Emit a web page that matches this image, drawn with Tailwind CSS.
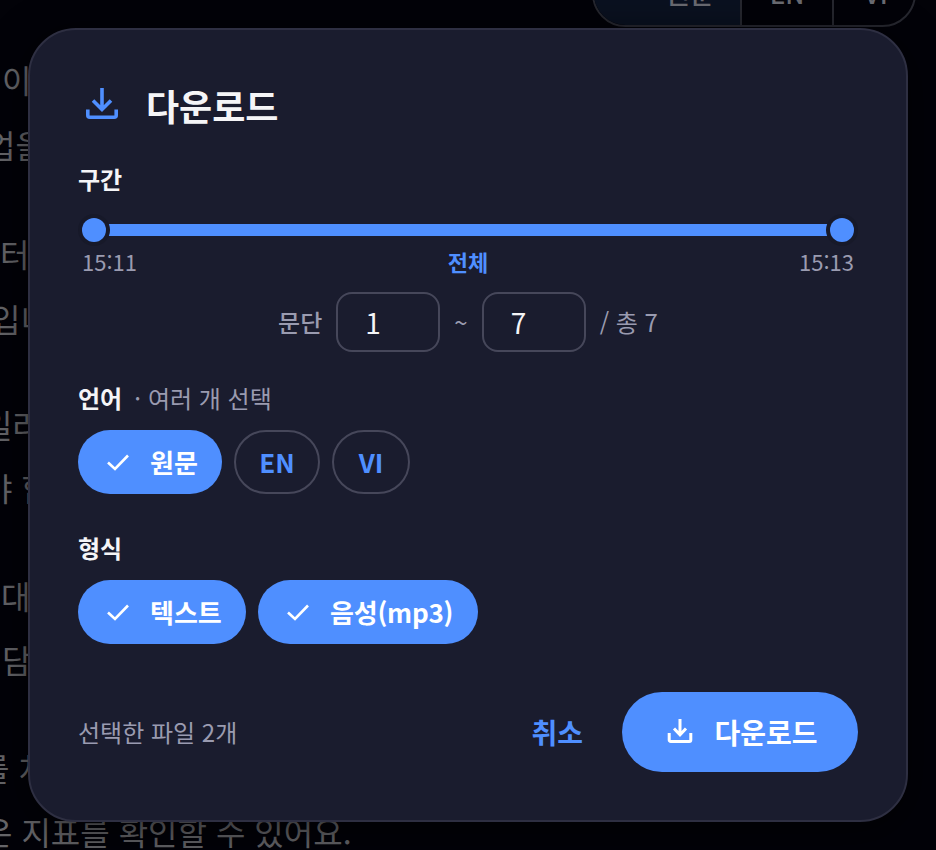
<!DOCTYPE html>
<html lang="ko"><head><meta charset="utf-8">
<script src="https://cdn.jsdelivr.net/npm/@tailwindcss/browser@4"></script>
</head>
<body class="m-0 bg-black">
<div class="relative w-[936px] h-[850px] overflow-hidden bg-[#020208] font-['Noto_Sans_CJK_KR','Noto_Sans',sans-serif]">
  <!-- page behind the dialog -->
  <div class="absolute inset-0 text-[32px] leading-[64px] text-[#66666a] whitespace-nowrap pt-[47px]">
    <p class="ml-[2px]">이</p>
    <p class="-ml-[14px] mt-[1px]">업을</p>
    <p class="ml-[0px] mt-[45px]">터</p>
    <p class="-ml-[9px] mt-[1px]">입니</p>
    <p class="-ml-[17px] mt-[42px]">일러</p>
    <p class="-ml-[17px] -mt-[1px]">야 합</p>
    <p class="ml-[1px] mt-[44px]">대</p>
    <p class="ml-[2px]">담</p>
    <p class="-ml-[20px] mt-[44px]">를 처</p>
    <p class="-ml-[17px]">은 지표를 확인할 수 있어요.</p>
  </div>
  <div class="absolute left-[592px] -top-[40px] w-[324px] h-[67px] rounded-[34px] border-2 border-[#26272f] flex overflow-hidden text-[26px] font-medium text-[#6a6b72]">
    <div class="w-[148px] bg-[#0a1120] flex items-end justify-center border-r-2 border-[#26272f] pb-[13px] pl-[46px]">원문</div>
    <div class="w-[92px] flex items-end justify-center border-r-2 border-[#26272f] pb-[13px]">EN</div>
    <div class="flex-1 flex items-end justify-center pb-[13px] pl-[4px]">VI</div>
  </div>

  <!-- dialog -->
  <div class="absolute left-[28px] top-[28px] w-[880px] h-[794px] rounded-[48px] border-2 border-[#2e2f42] bg-[#1a1c2e] px-[48px] pt-[48px] flex flex-col shadow-[0_8px_40px_rgba(0,0,0,0.6)]">
    <div class="flex items-center h-[54px] pl-[6px] gap-[26px]">
      <svg class="w-[36px] h-[36px] shrink-0" viewBox="0 0 36 36" fill="none" stroke="#4f8fff" stroke-width="3.6">
        <path d="M18 1V22M9 13.500L18 22.500L27 13.500"/>
        <path d="M3.800 22.500V28.200a2 2 0 0 0 2 2H30.200a2 2 0 0 0 2-2V22.500"/>
      </svg>
      <h2 class="text-[36px] font-semibold leading-[54px] text-[#f5f5f7]">다운로드</h2>
    </div>

    <div class="mt-[29px] text-[24px] font-semibold leading-[36px] text-[#f5f5f7]">구간</div>
    <div class="relative mt-[27px] h-[12px] mx-[16px] bg-[#4f8fff]">
      <span class="absolute -left-[12px] -top-[6px] w-[24px] h-[24px] rounded-full bg-[#4f8fff] shadow-[0_0_0_4px_#171929]"></span>
      <span class="absolute -right-[12px] -top-[6px] w-[24px] h-[24px] rounded-full bg-[#4f8fff] shadow-[0_0_0_4px_#171929]"></span>
    </div>
    <div class="mt-[7px] mx-[4px] flex justify-between text-[22px] leading-[36px] text-[#9a9bb0]">
      <span>15:11</span><span class="font-semibold text-[#4f8fff]">전체</span><span>15:13</span>
    </div>

    <div class="mt-[13px] flex items-center justify-center text-[24px] text-[#9a9bb0]">
      <span class="font-medium">문단</span>
      <div class="ml-[14px] w-[104px] h-[60px] rounded-[16px] border-2 border-[#46475a] flex items-center pl-[27px] text-[28px] text-[#f5f5f7]">1</div>
      <span class="mx-[14px]">~</span>
      <div class="w-[104px] h-[60px] rounded-[16px] border-2 border-[#46475a] flex items-center pl-[27px] text-[28px] text-[#f5f5f7]">7</div>
      <span class="ml-[14px]">/ 총 7</span>
    </div>

    <div class="mt-[28px] h-[36px] flex items-center text-[24px] leading-[36px] text-[#9a9bb0]">
      <span class="font-semibold text-[#f5f5f7]">언어</span><span class="ml-[12px]">·</span><span class="ml-[7px]">여러 개 선택</span>
    </div>
    <div class="mt-[14px] flex gap-[12px]">
      <div class="h-[64px] w-[144px] rounded-full bg-[#4f8fff] flex items-center pl-[28px] pb-[2px] gap-[20px] text-[26px] font-semibold text-white">
        <svg class="w-[24px] h-[24px] translate-y-[1px]" viewBox="0 0 24 24" fill="none" stroke="#fff" stroke-width="2.600"><path d="M2 12.500L9 19L22 5.500"/></svg>원문</div>
      <div class="h-[64px] w-[86px] rounded-full border-2 border-[#46475a] flex items-center justify-center pb-[2px] text-[26px] font-semibold text-[#4f8fff]">EN</div>
      <div class="h-[64px] w-[78px] rounded-full border-2 border-[#46475a] flex items-center justify-center pb-[2px] text-[26px] font-semibold text-[#4f8fff]">VI</div>
    </div>

    <div class="mt-[36px] text-[24px] font-semibold leading-[36px] text-[#f5f5f7]">형식</div>
    <div class="mt-[14px] flex gap-[12px]">
      <div class="h-[64px] w-[168px] rounded-full bg-[#4f8fff] flex items-center pl-[28px] pb-[2px] gap-[20px] text-[26px] font-semibold text-white">
        <svg class="w-[24px] h-[24px] translate-y-[1px]" viewBox="0 0 24 24" fill="none" stroke="#fff" stroke-width="2.600"><path d="M2 12.500L9 19L22 5.500"/></svg>텍스트</div>
      <div class="h-[64px] w-[220px] rounded-full bg-[#4f8fff] flex items-center pl-[28px] pb-[2px] gap-[20px] text-[26px] font-semibold text-white">
        <svg class="w-[24px] h-[24px] translate-y-[1px]" viewBox="0 0 24 24" fill="none" stroke="#fff" stroke-width="2.600"><path d="M2 12.500L9 19L22 5.500"/></svg><span class="tracking-[-0.2px]">음성(mp3)</span></div>
    </div>

    <div class="mt-[48px] flex items-center">
      <span class="text-[24px] text-[#9a9bb0]">선택한 파일 2개</span>
      <span class="ml-auto text-[28px] font-semibold text-[#4f8fff]">취소</span>
      <div class="ml-[39px] w-[236px] h-[80px] rounded-full bg-[#4f8fff] flex items-center justify-center gap-[20px] pl-[4px] text-[28px] font-semibold text-white">
        <svg class="w-[28px] h-[28px]" viewBox="0 0 28 28" fill="none" stroke="#fff" stroke-width="3">
          <path d="M14 1V17M8 10.500L14 16.800L20 10.500"/>
          <path d="M3.200 15V22a1.500 1.500 0 0 0 1.500 1.500H23.300a1.500 1.500 0 0 0 1.500-1.500V15"/>
        </svg>다운로드</div>
    </div>
  </div>
</div>
</body></html>
